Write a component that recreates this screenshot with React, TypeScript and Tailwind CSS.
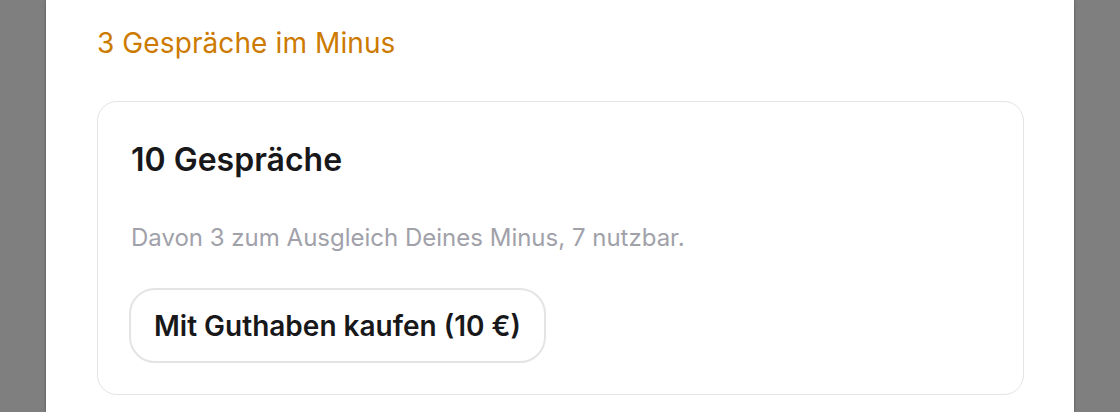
export default function App() {
  return (
    <div className="h-[412px] w-[1120px] overflow-hidden bg-[#7f7f7f]" style={{ fontFamily: "Inter, 'Noto Sans', sans-serif" }}>
      <div className="ml-[46px] h-full w-[1028px] bg-white pl-[51px] pr-[50px] pt-[25px] shadow-[0_0_3px_rgba(0,0,0,0.35)]">
        <h2 className="text-[28px] leading-[36px] font-normal tracking-[0.1px] text-[#cc7a00]">3 Gespräche im Minus</h2>

        <div className="mt-[40px] rounded-[20px] border border-[#e4e4e7] px-[33px] pb-[31px] pt-[38px]">
          <h3 className="text-[32px] leading-[40px] font-semibold text-[#18181b]">10 Gespräche</h3>
          <p className="mt-[42px] text-[24px] leading-[32px] text-[#a1a1aa]">
            Davon 3 zum Ausgleich Deines Minus, 7 nutzbar.
          </p>
          <button className="-ml-[2px] mt-[34px] h-[75px] rounded-[26px] border-2 border-[#e4e4e7] bg-white px-[23px] text-[28px] font-semibold text-[#18181b]">
            Mit Guthaben kaufen (10 €)
          </button>
        </div>
      </div>
    </div>
  );
}
